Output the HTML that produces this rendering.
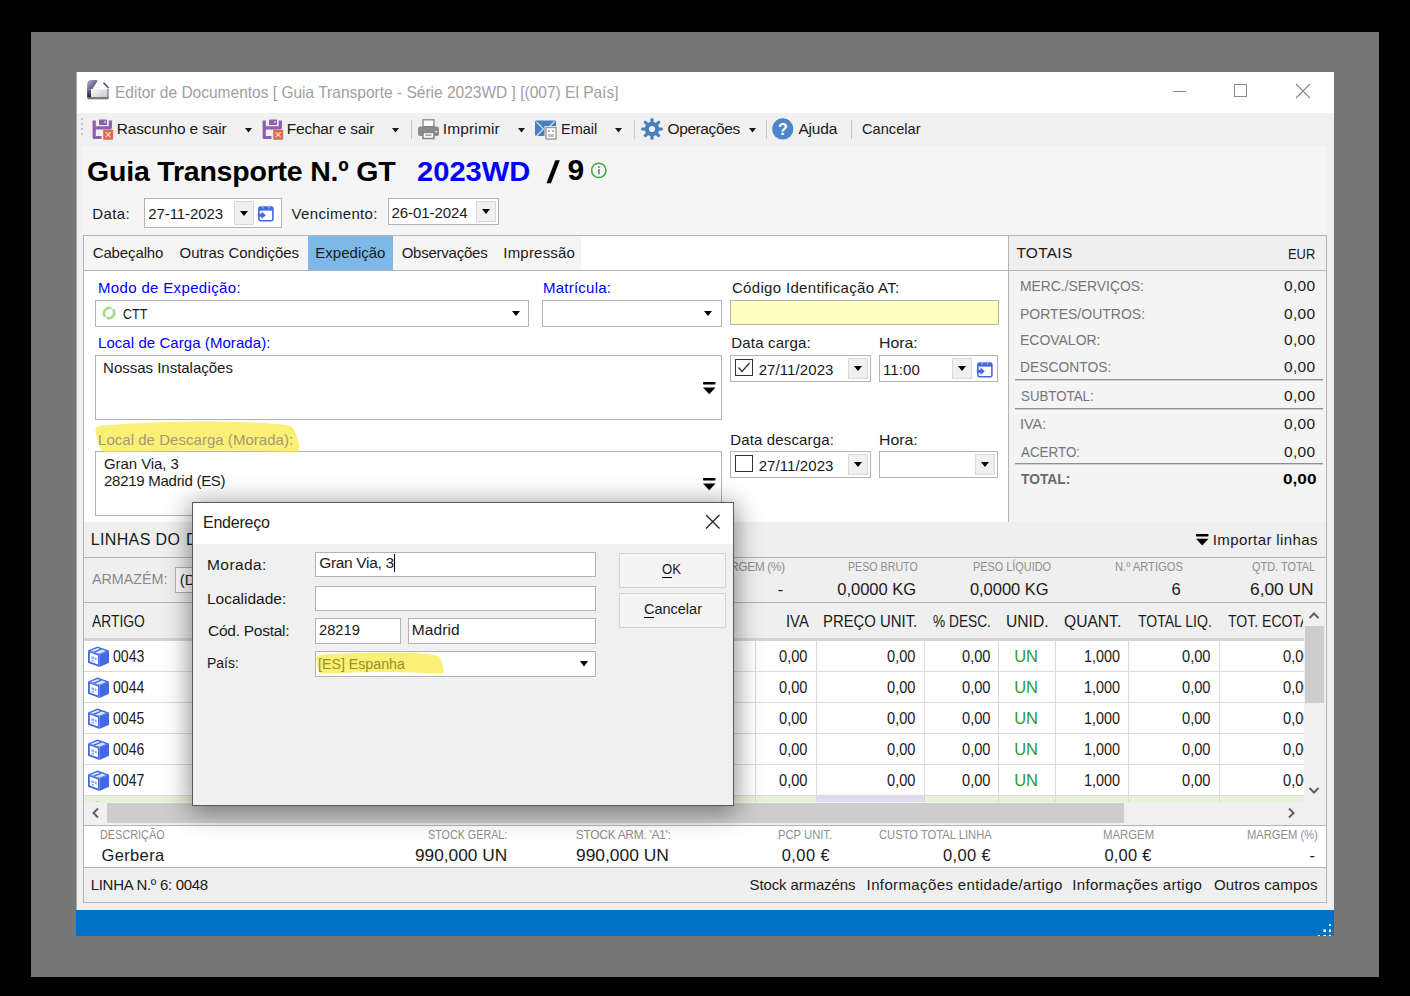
<!DOCTYPE html>
<html><head><meta charset="utf-8"><title>Editor de Documentos</title>
<style>
html,body{margin:0;padding:0;}
body{width:1410px;height:996px;position:relative;overflow:hidden;background:#000;font-family:"Liberation Sans",sans-serif;}
.a{position:absolute;}
.t{white-space:nowrap;transform-origin:0 0;}
svg.a{overflow:visible;}
</style></head><body>
<div class="a" style="left:31px;top:32px;width:1348px;height:945px;background:#767676;"></div>
<div class="a" style="left:76px;top:72px;width:1258px;height:864px;background:#f0f0f0;"></div>
<div class="a" style="left:76px;top:72px;width:1258px;height:41px;background:#ffffff;"></div>
<div class="a" style="left:76px;top:72px;width:1px;height:864px;background:#a9a9a9;"></div>
<div class="a" style="left:1173px;top:91px;width:13px;height:1px;background:#8a8a8a;"></div>
<div class="a" style="left:1234px;top:84px;width:13px;height:13px;box-sizing:border-box;border:1px solid #8a8a8a;"></div>
<svg class="a" style="left:1295px;top:83px;" width="16" height="16" viewBox="0 0 16 16"><path d="M1 1L15 15M15 1L1 15" stroke="#8a8a8a" stroke-width="1.1"/></svg>
<div class="a" style="left:82px;top:146px;width:1245px;height:89px;background:#f5f5f5;"></div>
<div class="a" style="left:83px;top:235px;width:926px;height:288px;background:#ffffff;box-sizing:border-box;border:1px solid #b4b4b4;"></div>
<div class="a" style="left:84px;top:236px;width:497px;height:34px;background:#f5f5f5;"></div>
<div class="a" style="left:308px;top:236px;width:85px;height:34px;background:#7eb8e8;"></div>
<div class="a" style="left:84px;top:270px;width:924px;height:1px;background:#b4b4b4;"></div>
<div class="a" style="left:1008px;top:235px;width:319px;height:288px;background:#f4f4f4;box-sizing:border-box;border:1px solid #b4b4b4;"></div>
<div class="a" style="left:1009px;top:236px;width:317px;height:34px;background:#efefef;"></div>
<div class="a" style="left:1009px;top:270px;width:317px;height:1px;background:#b4b4b4;"></div>
<div class="a" style="left:1015px;top:379px;width:308px;height:1px;background:#8f8f8f;"></div>
<div class="a" style="left:1015px;top:380px;width:308px;height:1px;background:#cfcfcf;"></div>
<div class="a" style="left:1015px;top:408px;width:308px;height:1px;background:#8f8f8f;"></div>
<div class="a" style="left:1015px;top:409px;width:308px;height:1px;background:#cfcfcf;"></div>
<div class="a" style="left:1015px;top:463px;width:308px;height:1px;background:#8f8f8f;"></div>
<div class="a" style="left:1015px;top:464px;width:308px;height:1px;background:#cfcfcf;"></div>
<div class="a" style="left:83px;top:522px;width:1244px;height:381px;background:#efefef;"></div>
<div class="a" style="left:83px;top:522px;width:1px;height:381px;background:#b4b4b4;"></div>
<div class="a" style="left:1326px;top:522px;width:1px;height:381px;background:#b4b4b4;"></div>
<div class="a" style="left:83px;top:557px;width:1244px;height:1px;background:#b4b4b4;"></div>
<div class="a" style="left:83px;top:602px;width:1244px;height:1px;background:#b4b4b4;"></div>
<div class="a" style="left:84px;top:638px;width:1220px;height:3px;background:#d4d4d4;"></div>
<div class="a" style="left:84px;top:641px;width:1220px;height:161px;background:#ffffff;"></div>
<div class="a" style="left:84px;top:671px;width:1220px;height:1px;background:#dadada;"></div>
<div class="a" style="left:84px;top:702px;width:1220px;height:1px;background:#dadada;"></div>
<div class="a" style="left:84px;top:733px;width:1220px;height:1px;background:#dadada;"></div>
<div class="a" style="left:84px;top:764px;width:1220px;height:1px;background:#dadada;"></div>
<div class="a" style="left:84px;top:795px;width:1220px;height:1px;background:#dadada;"></div>
<div class="a" style="left:84px;top:796px;width:1220px;height:6px;background:#e7f2dc;"></div>
<div class="a" style="left:816px;top:796px;width:108px;height:6px;background:#e1d9ee;"></div>
<div class="a" style="left:755px;top:641px;width:1px;height:161px;background:#dadada;"></div>
<div class="a" style="left:816px;top:641px;width:1px;height:161px;background:#dadada;"></div>
<div class="a" style="left:924px;top:641px;width:1px;height:161px;background:#dadada;"></div>
<div class="a" style="left:998px;top:641px;width:1px;height:161px;background:#dadada;"></div>
<div class="a" style="left:1055px;top:641px;width:1px;height:161px;background:#dadada;"></div>
<div class="a" style="left:1128px;top:641px;width:1px;height:161px;background:#dadada;"></div>
<div class="a" style="left:1219px;top:641px;width:1px;height:161px;background:#dadada;"></div>
<div class="a" style="left:1304px;top:603px;width:22px;height:199px;background:#f0f0f0;"></div>
<div class="a" style="left:1305px;top:626px;width:19px;height:77px;background:#cdcdcd;"></div>
<svg class="a" style="left:1308px;top:610px;" width="12" height="10" viewBox="0 0 12 10"><path d="M1.5 8L6 3.5L10.5 8" stroke="#606060" stroke-width="2" fill="none"/></svg>
<svg class="a" style="left:1308px;top:786px;" width="12" height="10" viewBox="0 0 12 10"><path d="M1.5 2L6 6.5L10.5 2" stroke="#606060" stroke-width="2" fill="none"/></svg>
<div class="a" style="left:84px;top:802px;width:1242px;height:24px;background:#f0f0f0;"></div>
<div class="a" style="left:107px;top:803px;width:1017px;height:20px;background:#cdcdcd;"></div>
<svg class="a" style="left:90px;top:807px;" width="10" height="12" viewBox="0 0 10 12"><path d="M8 1.5L3.5 6L8 10.5" stroke="#606060" stroke-width="2" fill="none"/></svg>
<svg class="a" style="left:1287px;top:807px;" width="10" height="12" viewBox="0 0 10 12"><path d="M2 1.5L6.5 6L2 10.5" stroke="#606060" stroke-width="2" fill="none"/></svg>
<div class="a" style="left:83px;top:825px;width:1244px;height:1px;background:#b4b4b4;"></div>
<div class="a" style="left:84px;top:826px;width:1242px;height:41px;background:#ffffff;"></div>
<div class="a" style="left:84px;top:867px;width:1242px;height:1px;background:#b4b4b4;"></div>
<div class="a" style="left:83px;top:902px;width:1244px;height:1px;background:#b4b4b4;"></div>
<div class="a" style="left:76px;top:910px;width:1258px;height:26px;background:#0072c6;"></div>
<div class="a" style="left:144px;top:198px;width:138px;height:30px;background:#ffffff;box-sizing:border-box;border:1px solid #b3b3b3;"></div>
<div class="a" style="left:234px;top:201px;width:20px;height:24px;background:#f0f0f0;box-sizing:border-box;border:1px solid #d9d9d9;"></div>
<svg class="a" style="left:240.0px;top:210.5px;" width="8" height="5" viewBox="0 0 8 5"><path d="M0 0H8L4.0 5Z" fill="#000"/></svg>
<div class="a" style="left:388px;top:198px;width:111px;height:27px;background:#ffffff;box-sizing:border-box;border:1px solid #b3b3b3;"></div>
<div class="a" style="left:476px;top:201px;width:20px;height:21px;background:#f0f0f0;box-sizing:border-box;border:1px solid #d9d9d9;"></div>
<svg class="a" style="left:482.0px;top:209.0px;" width="8" height="5" viewBox="0 0 8 5"><path d="M0 0H8L4.0 5Z" fill="#000"/></svg>
<div class="a" style="left:95px;top:300px;width:434px;height:27px;background:#ffffff;box-sizing:border-box;border:1px solid #b3b3b3;"></div>
<svg class="a" style="left:511.5px;top:310.5px;" width="8" height="5" viewBox="0 0 8 5"><path d="M0 0H8L4.0 5Z" fill="#000"/></svg>
<div class="a" style="left:542px;top:300px;width:180px;height:27px;background:#ffffff;box-sizing:border-box;border:1px solid #b3b3b3;"></div>
<svg class="a" style="left:703.7px;top:310.5px;" width="8" height="5" viewBox="0 0 8 5"><path d="M0 0H8L4.0 5Z" fill="#000"/></svg>
<div class="a" style="left:730px;top:300px;width:269px;height:25px;background:#ffffc0;box-sizing:border-box;border:1px solid #b3b3b3;"></div>
<div class="a" style="left:95px;top:355px;width:627px;height:65px;background:#ffffff;box-sizing:border-box;border:1px solid #b3b3b3;"></div>
<svg class="a" style="left:703px;top:382px;" width="13" height="13" viewBox="0 0 13 13"><rect x="0" y="0" width="12.5" height="2.6" rx="0.8" fill="#000"/><path d="M0 5.4H12.5L6.25 12.2Z" fill="#000"/></svg>
<div class="a" style="left:95px;top:451px;width:627px;height:65px;background:#ffffff;box-sizing:border-box;border:1px solid #b3b3b3;"></div>
<svg class="a" style="left:703px;top:478px;" width="13" height="13" viewBox="0 0 13 13"><rect x="0" y="0" width="12.5" height="2.6" rx="0.8" fill="#000"/><path d="M0 5.4H12.5L6.25 12.2Z" fill="#000"/></svg>
<div class="a" style="left:730px;top:355px;width:141px;height:27px;background:#ffffff;box-sizing:border-box;border:1px solid #b3b3b3;"></div>
<div class="a" style="left:735px;top:359px;width:18px;height:17px;box-sizing:border-box;border:1.3px solid #333333;"></div>
<svg class="a" style="left:735px;top:359px;" width="18" height="17" viewBox="0 0 18 17"><path d="M3.5 8.5L7 12.5L14.5 4" stroke="#333" stroke-width="1.3" fill="none"/></svg>
<div class="a" style="left:848px;top:358px;width:20px;height:21px;background:#f0f0f0;box-sizing:border-box;border:1px solid #d9d9d9;"></div>
<svg class="a" style="left:854.0px;top:366.0px;" width="8" height="5" viewBox="0 0 8 5"><path d="M0 0H8L4.0 5Z" fill="#000"/></svg>
<div class="a" style="left:879px;top:355px;width:119px;height:27px;background:#ffffff;box-sizing:border-box;border:1px solid #b3b3b3;"></div>
<div class="a" style="left:730px;top:451px;width:141px;height:27px;background:#ffffff;box-sizing:border-box;border:1px solid #b3b3b3;"></div>
<div class="a" style="left:735px;top:455px;width:18px;height:17px;box-sizing:border-box;border:1.3px solid #333333;"></div>
<div class="a" style="left:848px;top:454px;width:20px;height:21px;background:#f0f0f0;box-sizing:border-box;border:1px solid #d9d9d9;"></div>
<svg class="a" style="left:854.0px;top:462.0px;" width="8" height="5" viewBox="0 0 8 5"><path d="M0 0H8L4.0 5Z" fill="#000"/></svg>
<div class="a" style="left:879px;top:451px;width:119px;height:27px;background:#ffffff;box-sizing:border-box;border:1px solid #b3b3b3;"></div>
<div class="a" style="left:952px;top:358px;width:20px;height:21px;background:#f0f0f0;box-sizing:border-box;border:1px solid #d9d9d9;"></div>
<svg class="a" style="left:958.0px;top:366.0px;" width="8" height="5" viewBox="0 0 8 5"><path d="M0 0H8L4.0 5Z" fill="#000"/></svg>
<div class="a" style="left:975px;top:454px;width:20px;height:21px;background:#f0f0f0;box-sizing:border-box;border:1px solid #d9d9d9;"></div>
<svg class="a" style="left:981.0px;top:462.0px;" width="8" height="5" viewBox="0 0 8 5"><path d="M0 0H8L4.0 5Z" fill="#000"/></svg>
<div class="a" style="left:175px;top:567px;width:85px;height:26px;background:#ffffff;box-sizing:border-box;border:1px solid #b3b3b3;"></div>
<svg class="a" style="left:94px;top:420px;" width="208" height="35" viewBox="0 0 208 35"><path d="M1.5 8.5Q2 6 8 5.5Q60 1.2 120 1.5Q190 2.5 197 6.5Q201 9 204 20Q206 31 203 32.5Q150 30 100 30.5Q40 31.5 12 32Q7 32 5.5 27Q1 14 1.5 8.5Z" fill="rgba(246,234,64,0.72)"/></svg>
<div class="a t" style="left:115.36px;top:83.93px;font-size:16.5px;line-height:16.5px;color:#a0a0a0;transform:scaleX(0.9401);">Editor de Documentos [ Guia Transporte - Série 2023WD ] [(007) El País]</div>
<div class="a t" style="left:116.70px;top:121.28px;font-size:15.5px;line-height:15.5px;color:#1a1a1a;letter-spacing:-0.139px;">Rascunho e sair</div>
<div class="a t" style="left:286.80px;top:121.28px;font-size:15.5px;line-height:15.5px;color:#1a1a1a;letter-spacing:-0.232px;">Fechar e sair</div>
<div class="a t" style="left:442.70px;top:121.28px;font-size:15.5px;line-height:15.5px;color:#1a1a1a;letter-spacing:0.157px;">Imprimir</div>
<div class="a t" style="left:560.76px;top:121.28px;font-size:15.5px;line-height:15.5px;color:#1a1a1a;transform:scaleX(0.9353);">Email</div>
<div class="a t" style="left:667.50px;top:121.28px;font-size:15.5px;line-height:15.5px;color:#1a1a1a;letter-spacing:-0.396px;">Operações</div>
<div class="a t" style="left:798.40px;top:121.28px;font-size:15.5px;line-height:15.5px;color:#1a1a1a;letter-spacing:-0.181px;">Ajuda</div>
<div class="a t" style="left:862.10px;top:121.28px;font-size:15.5px;line-height:15.5px;color:#1a1a1a;transform:scaleX(0.9439);">Cancelar</div>
<div class="a t" style="left:87.00px;top:157.37px;font-size:28.5px;line-height:28.5px;color:#000;font-weight:bold;letter-spacing:-0.203px;">Guia Transporte N.º GT</div>
<div class="a t" style="left:417.10px;top:157.37px;font-size:28.5px;line-height:28.5px;color:#0000ff;font-weight:bold;transform:scaleX(1.0217);">2023WD</div>
<svg class="a" style="left:544px;top:158px;" width="18" height="28" viewBox="0 0 18 28"><path d="M2.5 25.2H7L15.8 2.2H11.3Z" fill="#000"/></svg>
<div class="a t" style="left:567.50px;top:155.20px;font-size:30px;line-height:30px;color:#000;font-weight:bold;">9</div>
<div class="a t" style="left:92.30px;top:205.50px;font-size:15px;line-height:15px;color:#1a1a1a;letter-spacing:0.354px;">Data:</div>
<div class="a t" style="left:148.30px;top:205.70px;font-size:15px;line-height:15px;color:#1a1a1a;letter-spacing:-0.086px;">27-11-2023</div>
<div class="a t" style="left:291.60px;top:205.50px;font-size:15px;line-height:15px;color:#1a1a1a;letter-spacing:0.322px;">Vencimento:</div>
<div class="a t" style="left:391.50px;top:205.30px;font-size:15px;line-height:15px;color:#1a1a1a;letter-spacing:-0.076px;">26-01-2024</div>
<div class="a t" style="left:92.70px;top:245.10px;font-size:15px;line-height:15px;color:#1a1a1a;letter-spacing:-0.122px;">Cabeçalho</div>
<div class="a t" style="left:179.50px;top:245.10px;font-size:15px;line-height:15px;color:#1a1a1a;letter-spacing:-0.031px;">Outras Condições</div>
<div class="a t" style="left:315.30px;top:245.10px;font-size:15px;line-height:15px;color:#1a1a1a;letter-spacing:0.012px;">Expedição</div>
<div class="a t" style="left:401.70px;top:245.10px;font-size:15px;line-height:15px;color:#1a1a1a;letter-spacing:-0.237px;">Observações</div>
<div class="a t" style="left:503.30px;top:245.10px;font-size:15px;line-height:15px;color:#1a1a1a;letter-spacing:0.202px;">Impressão</div>
<div class="a t" style="left:98.00px;top:280.00px;font-size:15px;line-height:15px;color:#0000ff;letter-spacing:0.342px;">Modo de Expedição:</div>
<div class="a t" style="left:543.00px;top:280.00px;font-size:15px;line-height:15px;color:#0000ff;letter-spacing:0.235px;">Matrícula:</div>
<div class="a t" style="left:731.90px;top:279.70px;font-size:15px;line-height:15px;color:#1a1a1a;letter-spacing:0.327px;">Código Identificação AT:</div>
<div class="a t" style="left:122.80px;top:306.00px;font-size:15px;line-height:15px;color:#1a1a1a;transform:scaleX(0.8346);">CTT</div>
<div class="a t" style="left:98.00px;top:335.40px;font-size:15px;line-height:15px;color:#0000ff;letter-spacing:0.063px;">Local de Carga (Morada):</div>
<div class="a t" style="left:731.30px;top:335.40px;font-size:15px;line-height:15px;color:#1a1a1a;letter-spacing:0.183px;">Data carga:</div>
<div class="a t" style="left:878.95px;top:335.40px;font-size:15px;line-height:15px;color:#1a1a1a;transform:scaleX(1.0547);">Hora:</div>
<div class="a t" style="left:103.10px;top:359.50px;font-size:15px;line-height:15px;color:#1a1a1a;letter-spacing:-0.015px;">Nossas Instalações</div>
<div class="a t" style="left:758.70px;top:362.10px;font-size:15px;line-height:15px;color:#1a1a1a;letter-spacing:0.087px;">27/11/2023</div>
<div class="a t" style="left:882.90px;top:362.10px;font-size:15px;line-height:15px;color:#1a1a1a;letter-spacing:0.130px;">11:00</div>
<div class="a t" style="left:98.00px;top:431.70px;font-size:15px;line-height:15px;color:#a39a78;letter-spacing:0.035px;">Local de Descarga (Morada):</div>
<div class="a t" style="left:730.30px;top:431.60px;font-size:15px;line-height:15px;color:#1a1a1a;letter-spacing:0.142px;">Data descarga:</div>
<div class="a t" style="left:878.95px;top:431.60px;font-size:15px;line-height:15px;color:#1a1a1a;transform:scaleX(1.0547);">Hora:</div>
<div class="a t" style="left:104.00px;top:456.00px;font-size:15px;line-height:15px;color:#1a1a1a;letter-spacing:-0.076px;">Gran Via, 3</div>
<div class="a t" style="left:104.00px;top:473.40px;font-size:15px;line-height:15px;color:#1a1a1a;letter-spacing:-0.269px;">28219 Madrid (ES)</div>
<div class="a t" style="left:758.70px;top:458.30px;font-size:15px;line-height:15px;color:#1a1a1a;letter-spacing:0.087px;">27/11/2023</div>
<div class="a t" style="left:1016.40px;top:245.38px;font-size:15.5px;line-height:15.5px;color:#1a1a1a;letter-spacing:0.259px;">TOTAIS</div>
<div class="a t" style="left:1288.04px;top:245.80px;font-size:15px;line-height:15px;color:#1a1a1a;transform:scaleX(0.8593);">EUR</div>
<div class="a t" style="left:1019.60px;top:278.38px;font-size:15.5px;line-height:15.5px;color:#767676;transform:scaleX(0.8951);">MERC./SERVIÇOS:</div>
<div class="a t" style="left:1284.00px;top:278.38px;font-size:15.5px;line-height:15.5px;color:#1a1a1a;letter-spacing:0.284px;">0,00</div>
<div class="a t" style="left:1019.60px;top:305.58px;font-size:15.5px;line-height:15.5px;color:#767676;transform:scaleX(0.9040);">PORTES/OUTROS:</div>
<div class="a t" style="left:1284.00px;top:305.58px;font-size:15.5px;line-height:15.5px;color:#1a1a1a;letter-spacing:0.284px;">0,00</div>
<div class="a t" style="left:1019.60px;top:332.18px;font-size:15.5px;line-height:15.5px;color:#767676;transform:scaleX(0.9013);">ECOVALOR:</div>
<div class="a t" style="left:1284.00px;top:332.18px;font-size:15.5px;line-height:15.5px;color:#1a1a1a;letter-spacing:0.284px;">0,00</div>
<div class="a t" style="left:1019.61px;top:359.48px;font-size:15.5px;line-height:15.5px;color:#767676;transform:scaleX(0.8929);">DESCONTOS:</div>
<div class="a t" style="left:1284.00px;top:359.48px;font-size:15.5px;line-height:15.5px;color:#1a1a1a;letter-spacing:0.284px;">0,00</div>
<div class="a t" style="left:1020.50px;top:388.38px;font-size:15.5px;line-height:15.5px;color:#767676;transform:scaleX(0.8586);">SUBTOTAL:</div>
<div class="a t" style="left:1284.00px;top:388.38px;font-size:15.5px;line-height:15.5px;color:#1a1a1a;letter-spacing:0.284px;">0,00</div>
<div class="a t" style="left:1019.57px;top:415.98px;font-size:15.5px;line-height:15.5px;color:#767676;transform:scaleX(0.9329);">IVA:</div>
<div class="a t" style="left:1284.00px;top:415.98px;font-size:15.5px;line-height:15.5px;color:#1a1a1a;letter-spacing:0.284px;">0,00</div>
<div class="a t" style="left:1020.50px;top:443.68px;font-size:15.5px;line-height:15.5px;color:#767676;transform:scaleX(0.8638);">ACERTO:</div>
<div class="a t" style="left:1284.00px;top:443.68px;font-size:15.5px;line-height:15.5px;color:#1a1a1a;letter-spacing:0.284px;">0,00</div>
<div class="a t" style="left:1020.50px;top:471.48px;font-size:15.5px;line-height:15.5px;color:#6a6a6a;font-weight:bold;transform:scaleX(0.8889);">TOTAL:</div>
<div class="a t" style="left:1282.60px;top:471.48px;font-size:15.5px;line-height:15.5px;color:#000;font-weight:bold;transform:scaleX(1.1101);">0,00</div>
<div class="a t" style="left:90.70px;top:532.16px;font-size:16px;line-height:16px;color:#1a1a1a;letter-spacing:0.363px;">LINHAS DO</div>
<div class="a t" style="left:186.00px;top:532.16px;font-size:16px;line-height:16px;color:#1a1a1a;">DOCUMENTO</div>
<div class="a t" style="left:1212.70px;top:531.80px;font-size:15px;line-height:15px;color:#1a1a1a;letter-spacing:0.407px;">Importar linhas</div>
<div class="a t" style="left:91.70px;top:571.48px;font-size:15.5px;line-height:15.5px;color:#8a8a8a;transform:scaleX(0.9230);">ARMAZÉM:</div>
<div class="a t" style="left:730.00px;top:561.44px;font-size:12px;line-height:12px;color:#8e8e8e;letter-spacing:-0.429px;">RGEM (%)</div>
<div class="a t" style="left:848.20px;top:561.44px;font-size:12px;line-height:12px;color:#8e8e8e;transform:scaleX(0.8883);">PESO BRUTO</div>
<div class="a t" style="left:973.00px;top:561.44px;font-size:12px;line-height:12px;color:#8e8e8e;transform:scaleX(0.9068);">PESO LÍQUIDO</div>
<div class="a t" style="left:1114.90px;top:561.44px;font-size:12px;line-height:12px;color:#8e8e8e;transform:scaleX(0.9319);">N.º ARTIGOS</div>
<div class="a t" style="left:1251.70px;top:561.44px;font-size:12px;line-height:12px;color:#8e8e8e;transform:scaleX(0.9100);">QTD. TOTAL</div>
<div class="a t" style="left:777.70px;top:580.53px;font-size:16.5px;line-height:16.5px;color:#1a1a1a;">-</div>
<div class="a t" style="left:837.30px;top:580.53px;font-size:16.5px;line-height:16.5px;color:#1a1a1a;letter-spacing:-0.020px;">0,0000 KG</div>
<div class="a t" style="left:969.90px;top:580.53px;font-size:16.5px;line-height:16.5px;color:#1a1a1a;letter-spacing:-0.020px;">0,0000 KG</div>
<div class="a t" style="left:1171.60px;top:580.53px;font-size:16.5px;line-height:16.5px;color:#1a1a1a;">6</div>
<div class="a t" style="left:1250.30px;top:580.53px;font-size:16.5px;line-height:16.5px;color:#1a1a1a;transform:scaleX(1.0501);">6,00 UN</div>
<div class="a t" style="left:91.70px;top:613.03px;font-size:16.5px;line-height:16.5px;color:#1a1a1a;transform:scaleX(0.8381);">ARTIGO</div>
<div class="a t" style="left:785.50px;top:613.03px;font-size:16.5px;line-height:16.5px;color:#1a1a1a;transform:scaleX(0.8988);">IVA</div>
<div class="a t" style="left:823.10px;top:613.03px;font-size:16.5px;line-height:16.5px;color:#1a1a1a;transform:scaleX(0.9016);">PREÇO UNIT.</div>
<div class="a t" style="left:933.20px;top:613.03px;font-size:16.5px;line-height:16.5px;color:#1a1a1a;transform:scaleX(0.8307);">% DESC.</div>
<div class="a t" style="left:1005.95px;top:613.03px;font-size:16.5px;line-height:16.5px;color:#1a1a1a;transform:scaleX(0.9462);">UNID.</div>
<div class="a t" style="left:1063.50px;top:613.03px;font-size:16.5px;line-height:16.5px;color:#1a1a1a;transform:scaleX(0.9462);">QUANT.</div>
<div class="a t" style="left:1137.60px;top:613.03px;font-size:16.5px;line-height:16.5px;color:#1a1a1a;transform:scaleX(0.8499);">TOTAL LIQ.</div>
<div class="a t" style="left:1227.50px;top:613.03px;font-size:16.5px;line-height:16.5px;color:#1a1a1a;transform:scaleX(0.8500);">TOT. ECOTAXA</div>
<div class="a t" style="left:113.20px;top:648.33px;font-size:16.5px;line-height:16.5px;color:#1a1a1a;transform:scaleX(0.8514);">0043</div>
<div class="a t" style="left:779.40px;top:648.33px;font-size:16.5px;line-height:16.5px;color:#1a1a1a;transform:scaleX(0.8861);">0,00</div>
<div class="a t" style="left:886.80px;top:648.33px;font-size:16.5px;line-height:16.5px;color:#1a1a1a;transform:scaleX(0.8861);">0,00</div>
<div class="a t" style="left:961.70px;top:648.33px;font-size:16.5px;line-height:16.5px;color:#1a1a1a;transform:scaleX(0.8861);">0,00</div>
<div class="a t" style="left:1014.30px;top:648.33px;font-size:16.5px;line-height:16.5px;color:#2f9a2f;letter-spacing:-0.216px;">UN</div>
<div class="a t" style="left:1083.83px;top:648.33px;font-size:16.5px;line-height:16.5px;color:#1a1a1a;transform:scaleX(0.8725);">1,000</div>
<div class="a t" style="left:1182.30px;top:648.33px;font-size:16.5px;line-height:16.5px;color:#1a1a1a;transform:scaleX(0.8861);">0,00</div>
<div class="a t" style="left:1282.50px;top:648.33px;font-size:16.5px;line-height:16.5px;color:#1a1a1a;transform:scaleX(0.8861);">0,00</div>
<div class="a t" style="left:113.20px;top:679.33px;font-size:16.5px;line-height:16.5px;color:#1a1a1a;transform:scaleX(0.8514);">0044</div>
<div class="a t" style="left:779.40px;top:679.33px;font-size:16.5px;line-height:16.5px;color:#1a1a1a;transform:scaleX(0.8861);">0,00</div>
<div class="a t" style="left:886.80px;top:679.33px;font-size:16.5px;line-height:16.5px;color:#1a1a1a;transform:scaleX(0.8861);">0,00</div>
<div class="a t" style="left:961.70px;top:679.33px;font-size:16.5px;line-height:16.5px;color:#1a1a1a;transform:scaleX(0.8861);">0,00</div>
<div class="a t" style="left:1014.30px;top:679.33px;font-size:16.5px;line-height:16.5px;color:#2f9a2f;letter-spacing:-0.216px;">UN</div>
<div class="a t" style="left:1083.83px;top:679.33px;font-size:16.5px;line-height:16.5px;color:#1a1a1a;transform:scaleX(0.8725);">1,000</div>
<div class="a t" style="left:1182.30px;top:679.33px;font-size:16.5px;line-height:16.5px;color:#1a1a1a;transform:scaleX(0.8861);">0,00</div>
<div class="a t" style="left:1282.50px;top:679.33px;font-size:16.5px;line-height:16.5px;color:#1a1a1a;transform:scaleX(0.8861);">0,00</div>
<div class="a t" style="left:113.20px;top:710.33px;font-size:16.5px;line-height:16.5px;color:#1a1a1a;transform:scaleX(0.8514);">0045</div>
<div class="a t" style="left:779.40px;top:710.33px;font-size:16.5px;line-height:16.5px;color:#1a1a1a;transform:scaleX(0.8861);">0,00</div>
<div class="a t" style="left:886.80px;top:710.33px;font-size:16.5px;line-height:16.5px;color:#1a1a1a;transform:scaleX(0.8861);">0,00</div>
<div class="a t" style="left:961.70px;top:710.33px;font-size:16.5px;line-height:16.5px;color:#1a1a1a;transform:scaleX(0.8861);">0,00</div>
<div class="a t" style="left:1014.30px;top:710.33px;font-size:16.5px;line-height:16.5px;color:#2f9a2f;letter-spacing:-0.216px;">UN</div>
<div class="a t" style="left:1083.83px;top:710.33px;font-size:16.5px;line-height:16.5px;color:#1a1a1a;transform:scaleX(0.8725);">1,000</div>
<div class="a t" style="left:1182.30px;top:710.33px;font-size:16.5px;line-height:16.5px;color:#1a1a1a;transform:scaleX(0.8861);">0,00</div>
<div class="a t" style="left:1282.50px;top:710.33px;font-size:16.5px;line-height:16.5px;color:#1a1a1a;transform:scaleX(0.8861);">0,00</div>
<div class="a t" style="left:113.20px;top:741.33px;font-size:16.5px;line-height:16.5px;color:#1a1a1a;transform:scaleX(0.8514);">0046</div>
<div class="a t" style="left:779.40px;top:741.33px;font-size:16.5px;line-height:16.5px;color:#1a1a1a;transform:scaleX(0.8861);">0,00</div>
<div class="a t" style="left:886.80px;top:741.33px;font-size:16.5px;line-height:16.5px;color:#1a1a1a;transform:scaleX(0.8861);">0,00</div>
<div class="a t" style="left:961.70px;top:741.33px;font-size:16.5px;line-height:16.5px;color:#1a1a1a;transform:scaleX(0.8861);">0,00</div>
<div class="a t" style="left:1014.30px;top:741.33px;font-size:16.5px;line-height:16.5px;color:#2f9a2f;letter-spacing:-0.216px;">UN</div>
<div class="a t" style="left:1083.83px;top:741.33px;font-size:16.5px;line-height:16.5px;color:#1a1a1a;transform:scaleX(0.8725);">1,000</div>
<div class="a t" style="left:1182.30px;top:741.33px;font-size:16.5px;line-height:16.5px;color:#1a1a1a;transform:scaleX(0.8861);">0,00</div>
<div class="a t" style="left:1282.50px;top:741.33px;font-size:16.5px;line-height:16.5px;color:#1a1a1a;transform:scaleX(0.8861);">0,00</div>
<div class="a t" style="left:113.20px;top:772.33px;font-size:16.5px;line-height:16.5px;color:#1a1a1a;transform:scaleX(0.8514);">0047</div>
<div class="a t" style="left:779.40px;top:772.33px;font-size:16.5px;line-height:16.5px;color:#1a1a1a;transform:scaleX(0.8861);">0,00</div>
<div class="a t" style="left:886.80px;top:772.33px;font-size:16.5px;line-height:16.5px;color:#1a1a1a;transform:scaleX(0.8861);">0,00</div>
<div class="a t" style="left:961.70px;top:772.33px;font-size:16.5px;line-height:16.5px;color:#1a1a1a;transform:scaleX(0.8861);">0,00</div>
<div class="a t" style="left:1014.30px;top:772.33px;font-size:16.5px;line-height:16.5px;color:#2f9a2f;letter-spacing:-0.216px;">UN</div>
<div class="a t" style="left:1083.83px;top:772.33px;font-size:16.5px;line-height:16.5px;color:#1a1a1a;transform:scaleX(0.8725);">1,000</div>
<div class="a t" style="left:1182.30px;top:772.33px;font-size:16.5px;line-height:16.5px;color:#1a1a1a;transform:scaleX(0.8861);">0,00</div>
<div class="a t" style="left:1282.50px;top:772.33px;font-size:16.5px;line-height:16.5px;color:#1a1a1a;transform:scaleX(0.8861);">0,00</div>
<div class="a t" style="left:99.50px;top:829.44px;font-size:12px;line-height:12px;color:#8e8e8e;transform:scaleX(0.9069);">DESCRIÇÃO</div>
<div class="a t" style="left:428.20px;top:829.44px;font-size:12px;line-height:12px;color:#8e8e8e;transform:scaleX(0.8963);">STOCK GERAL:</div>
<div class="a t" style="left:575.80px;top:829.44px;font-size:12px;line-height:12px;color:#8e8e8e;letter-spacing:-0.317px;">STOCK ARM. &#x27;A1&#x27;:</div>
<div class="a t" style="left:777.70px;top:829.44px;font-size:12px;line-height:12px;color:#8e8e8e;transform:scaleX(0.9363);">PCP UNIT.</div>
<div class="a t" style="left:879.00px;top:829.44px;font-size:12px;line-height:12px;color:#8e8e8e;transform:scaleX(0.9344);">CUSTO TOTAL LINHA</div>
<div class="a t" style="left:1102.80px;top:829.44px;font-size:12px;line-height:12px;color:#8e8e8e;transform:scaleX(0.9462);">MARGEM</div>
<div class="a t" style="left:1246.50px;top:829.44px;font-size:12px;line-height:12px;color:#8e8e8e;transform:scaleX(0.9316);">MARGEM (%)</div>
<div class="a t" style="left:101.50px;top:847.13px;font-size:16.5px;line-height:16.5px;color:#1a1a1a;letter-spacing:0.358px;">Gerbera</div>
<div class="a t" style="left:415.30px;top:847.13px;font-size:16.5px;line-height:16.5px;color:#1a1a1a;transform:scaleX(1.0466);">990,000 UN</div>
<div class="a t" style="left:575.80px;top:847.13px;font-size:16.5px;line-height:16.5px;color:#1a1a1a;transform:scaleX(1.0546);">990,000 UN</div>
<div class="a t" style="left:781.80px;top:847.13px;font-size:16.5px;line-height:16.5px;color:#1a1a1a;letter-spacing:0.400px;">0,00 €</div>
<div class="a t" style="left:943.00px;top:847.13px;font-size:16.5px;line-height:16.5px;color:#1a1a1a;letter-spacing:0.380px;">0,00 €</div>
<div class="a t" style="left:1104.40px;top:847.13px;font-size:16.5px;line-height:16.5px;color:#1a1a1a;letter-spacing:0.220px;">0,00 €</div>
<div class="a t" style="left:1309.40px;top:847.13px;font-size:16.5px;line-height:16.5px;color:#1a1a1a;">-</div>
<div class="a t" style="left:90.70px;top:876.80px;font-size:15px;line-height:15px;color:#1a1a1a;letter-spacing:-0.294px;">LINHA N.º 6: 0048</div>
<div class="a t" style="left:749.60px;top:876.80px;font-size:15px;line-height:15px;color:#1a1a1a;letter-spacing:-0.134px;">Stock armazéns</div>
<div class="a t" style="left:866.60px;top:876.80px;font-size:15px;line-height:15px;color:#1a1a1a;letter-spacing:0.377px;">Informações entidade/artigo</div>
<div class="a t" style="left:1072.30px;top:876.80px;font-size:15px;line-height:15px;color:#1a1a1a;letter-spacing:0.319px;">Informações artigo</div>
<div class="a t" style="left:1214.00px;top:876.80px;font-size:15px;line-height:15px;color:#1a1a1a;letter-spacing:0.141px;">Outros campos</div>
<div class="a t" style="left:179.80px;top:572.30px;font-size:15px;line-height:15px;color:#1a1a1a;">(Default)</div>
<div class="a" style="left:1304px;top:603px;width:22px;height:199px;background:#f0f0f0;"></div>
<div class="a" style="left:1303px;top:603px;width:1px;height:35px;background:#f0f0f0;"></div>
<div class="a" style="left:1305px;top:626px;width:19px;height:77px;background:#cdcdcd;"></div>
<svg class="a" style="left:1308px;top:610px;" width="12" height="10" viewBox="0 0 12 10"><path d="M1.5 8L6 3.5L10.5 8" stroke="#606060" stroke-width="2" fill="none"/></svg>
<svg class="a" style="left:1308px;top:786px;" width="12" height="10" viewBox="0 0 12 10"><path d="M1.5 2L6 6.5L10.5 2" stroke="#606060" stroke-width="2" fill="none"/></svg>
<div class="a" style="left:1326px;top:603px;width:8px;height:199px;background:#f0f0f0;"></div>
<div class="a" style="left:1326px;top:603px;width:1px;height:199px;background:#b4b4b4;"></div>
<svg class="a" style="left:86px;top:79px;" width="24" height="22" viewBox="0 0 24 22">
<defs><linearGradient id="wg1" x1="0" y1="0" x2="1" y2="1"><stop offset="0" stop-color="#b7b0d2"/><stop offset="1" stop-color="#3e3958"/></linearGradient>
<linearGradient id="wg2" x1="0" y1="0" x2="1" y2="1"><stop offset="0" stop-color="#ffffff"/><stop offset="1" stop-color="#c4bfc8"/></linearGradient>
<linearGradient id="wg3" x1="0" y1="0" x2="0" y2="1"><stop offset="0" stop-color="#6a6488"/><stop offset="1" stop-color="#2a2640"/></linearGradient></defs>
<path d="M1.1 5.5Q1.1 0.9 5.5 0.9H10.5Q12.2 1.2 11.2 2.8L6 10.5H1.1Z" fill="url(#wg1)"/>
<rect x="1.1" y="10.5" width="4" height="8" fill="url(#wg3)"/>
<rect x="5" y="10" width="17.5" height="8.5" fill="url(#wg2)"/>
<path d="M6.5 10.2L15.5 1.5L22.6 9.2V10.2Z" fill="#ffffff"/>
<path d="M17.5 3.6L22.6 9" stroke="#5a5670" stroke-width="1.6" fill="none"/>
<rect x="21.2" y="10" width="1.6" height="9" fill="#9a98a0"/>
<path d="M1.5 19.2H22.5" stroke="#5e5e5e" stroke-width="2.2" opacity="0.85"/>
</svg>
<div class="a" style="left:81px;top:118px;width:2px;height:2px;background:#c4c4c4;"></div>
<div class="a" style="left:81px;top:123px;width:2px;height:2px;background:#c4c4c4;"></div>
<div class="a" style="left:81px;top:128px;width:2px;height:2px;background:#c4c4c4;"></div>
<div class="a" style="left:81px;top:133px;width:2px;height:2px;background:#c4c4c4;"></div>
<svg class="a" style="left:91.5px;top:119px;" width="22" height="22" viewBox="0 0 22 22">
<path d="M2.2 1.5V18.5H9.5M2.2 8.8H18.3V1.5" stroke="#8e5fb0" stroke-width="3.2" fill="none" stroke-linejoin="round"/>
<rect x="7" y="0.5" width="8" height="5.5" rx="0.8" fill="#8e5fb0"/>
<rect x="12" y="2" width="2" height="2" fill="#c9b0dc"/>
<rect x="11.2" y="10.7" width="10" height="10" rx="0.6" fill="#e06a4c"/>
<path d="M13.8 13.3L18.6 18.1M18.6 13.3L13.8 18.1" stroke="#f4d6cc" stroke-width="1.3"/>
</svg>
<svg class="a" style="left:262.3px;top:119px;" width="22" height="22" viewBox="0 0 22 22">
<path d="M2.2 1.5V18.5H9.5M2.2 8.8H18.3V1.5" stroke="#8e5fb0" stroke-width="3.2" fill="none" stroke-linejoin="round"/>
<rect x="7" y="0.5" width="8" height="5.5" rx="0.8" fill="#8e5fb0"/>
<rect x="12" y="2" width="2" height="2" fill="#c9b0dc"/>
<rect x="11.2" y="10.7" width="10" height="10" rx="0.6" fill="#e06a4c"/>
<path d="M13.8 13.3L18.6 18.1M18.6 13.3L13.8 18.1" stroke="#f4d6cc" stroke-width="1.3"/>
</svg>
<svg class="a" style="left:244.5px;top:127.5px;" width="7" height="4.5" viewBox="0 0 7 4.5"><path d="M0 0H7L3.5 4.5Z" fill="#1a1a1a"/></svg>
<svg class="a" style="left:392px;top:127.5px;" width="7" height="4.5" viewBox="0 0 7 4.5"><path d="M0 0H7L3.5 4.5Z" fill="#1a1a1a"/></svg>
<svg class="a" style="left:518px;top:127.5px;" width="7" height="4.5" viewBox="0 0 7 4.5"><path d="M0 0H7L3.5 4.5Z" fill="#1a1a1a"/></svg>
<svg class="a" style="left:615.3px;top:127.5px;" width="7" height="4.5" viewBox="0 0 7 4.5"><path d="M0 0H7L3.5 4.5Z" fill="#1a1a1a"/></svg>
<svg class="a" style="left:749.4px;top:127.5px;" width="7" height="4.5" viewBox="0 0 7 4.5"><path d="M0 0H7L3.5 4.5Z" fill="#1a1a1a"/></svg>
<div class="a" style="left:411px;top:120px;width:1px;height:19px;background:#c8c8c8;"></div>
<div class="a" style="left:634px;top:120px;width:1px;height:19px;background:#c8c8c8;"></div>
<div class="a" style="left:766px;top:120px;width:1px;height:19px;background:#c8c8c8;"></div>
<div class="a" style="left:851px;top:120px;width:1px;height:19px;background:#c8c8c8;"></div>
<svg class="a" style="left:417px;top:119px;" width="23" height="21" viewBox="0 0 23 21">
<rect x="6" y="0.8" width="11" height="9" fill="#ffffff" stroke="#999" stroke-width="1.6"/>
<rect x="6" y="7" width="11" height="3" fill="#4a7fbf"/>
<path d="M3 7.5H20Q22 7.5 22 9.5V15Q22 17 20 17H3Q1 17 1 15V9.5Q1 7.5 3 7.5Z" fill="#8a8a8a"/>
<rect x="6" y="13.5" width="11" height="6" fill="#ffffff" stroke="#888" stroke-width="1.6"/>
<rect x="8.5" y="15.5" width="6" height="1.6" fill="#7aa6d6"/>
<rect x="18" y="12" width="2.5" height="1.2" fill="#ddd"/>
</svg>
<svg class="a" style="left:534px;top:119px;" width="24" height="22" viewBox="0 0 24 22">
<rect x="1" y="1.5" width="21" height="15.5" rx="1.5" fill="#4a7fbf"/>
<path d="M2.5 3L9.5 10L2.5 17M20.5 2.5L15 8" stroke="#d6e3f2" stroke-width="1.1" fill="none"/>
<rect x="11" y="7.5" width="12" height="13.5" fill="#f4f4f4" stroke="#f0f0f0" stroke-width="1"/>
<rect x="12" y="8.5" width="10" height="11.5" fill="#ffffff" stroke="#9a9a9a" stroke-width="1.4"/>
<circle cx="15" cy="12" r="1.1" fill="#a0a0a0"/><circle cx="19" cy="12" r="1.1" fill="#a0a0a0"/>
<rect x="14" y="15" width="6" height="3.2" fill="#c2c2c2"/>
</svg>
<svg class="a" style="left:640.5px;top:118px;" width="22" height="22" viewBox="0 0 22 22"><rect x="9.4" y="0.1999999999999993" width="3.2" height="5" rx="1" fill="#4a7fbf" transform="rotate(0 11 11)"/><rect x="9.4" y="0.1999999999999993" width="3.2" height="5" rx="1" fill="#4a7fbf" transform="rotate(45 11 11)"/><rect x="9.4" y="0.1999999999999993" width="3.2" height="5" rx="1" fill="#4a7fbf" transform="rotate(90 11 11)"/><rect x="9.4" y="0.1999999999999993" width="3.2" height="5" rx="1" fill="#4a7fbf" transform="rotate(135 11 11)"/><rect x="9.4" y="0.1999999999999993" width="3.2" height="5" rx="1" fill="#4a7fbf" transform="rotate(180 11 11)"/><rect x="9.4" y="0.1999999999999993" width="3.2" height="5" rx="1" fill="#4a7fbf" transform="rotate(225 11 11)"/><rect x="9.4" y="0.1999999999999993" width="3.2" height="5" rx="1" fill="#4a7fbf" transform="rotate(270 11 11)"/><rect x="9.4" y="0.1999999999999993" width="3.2" height="5" rx="1" fill="#4a7fbf" transform="rotate(315 11 11)"/><circle cx="11" cy="11" r="5.2" fill="none" stroke="#4a7fbf" stroke-width="4.2"/></svg>
<svg class="a" style="left:772px;top:118px;" width="22" height="22" viewBox="0 0 22 22"><circle cx="10.8" cy="10.9" r="10.6" fill="#4a86c8"/><text x="10.8" y="16.6" text-anchor="middle" font-family="Liberation Sans" font-weight="bold" font-size="16" fill="#fff">?</text></svg>
<svg class="a" style="left:590px;top:162px;" width="18" height="17" viewBox="0 0 18 17"><circle cx="8.8" cy="8.4" r="7.2" fill="none" stroke="#43a047" stroke-width="1.5"/><rect x="8" y="7" width="1.7" height="5.3" fill="#43a047"/><rect x="8" y="4.2" width="1.7" height="1.7" fill="#43a047"/></svg>
<svg class="a" style="left:257px;top:205px;" width="18" height="17" viewBox="0 0 18 17">
<rect x="1.9" y="2" width="14" height="13.8" rx="1.6" fill="none" stroke="#4169e1" stroke-width="1.6"/>
<rect x="1.9" y="2" width="14" height="3.6" fill="#4169e1"/>
<rect x="5" y="0.6" width="1.4" height="3" fill="#9fb4f0"/><rect x="11" y="0.6" width="1.4" height="3" fill="#9fb4f0"/>
<path d="M0.8 8.8H4.5V6.5L8.8 10.3L4.5 14.1V11.8H0.8Z" fill="#4169e1"/>
</svg>
<svg class="a" style="left:975.5px;top:361px;" width="18" height="17" viewBox="0 0 18 17">
<rect x="1.9" y="2" width="14" height="13.8" rx="1.6" fill="none" stroke="#4169e1" stroke-width="1.6"/>
<rect x="1.9" y="2" width="14" height="3.6" fill="#4169e1"/>
<rect x="5" y="0.6" width="1.4" height="3" fill="#9fb4f0"/><rect x="11" y="0.6" width="1.4" height="3" fill="#9fb4f0"/>
<path d="M0.8 8.8H4.5V6.5L8.8 10.3L4.5 14.1V11.8H0.8Z" fill="#4169e1"/>
</svg>
<svg class="a" style="left:101px;top:305px;" width="16" height="16" viewBox="0 0 16 16"><path d="M9.5 3A5.4 5.4 0 0 0 3.6 10.8" stroke="#a4d88a" stroke-width="2.6" fill="none" stroke-linecap="round"/><path d="M6.5 13A5.4 5.4 0 0 0 12.6 5.2" stroke="#a4d88a" stroke-width="2.6" fill="none" stroke-linecap="round"/></svg>
<svg class="a" style="left:1195.5px;top:533.5px;" width="13" height="12" viewBox="0 0 13 12"><rect x="0" y="0" width="12.5" height="2.6" rx="0.8" fill="#000"/><path d="M0 4.8H12.5L6.25 11.6Z" fill="#000"/></svg>
<svg class="a" style="left:86.5px;top:644.5px;" width="23" height="23" viewBox="0 0 23 23">
<path d="M1 5.5L10.5 1.5L22 5.5L12.5 9.5Z" fill="#4169e1"/>
<path d="M3.5 5.8L10.6 2.9L13 3.9L6 6.8Z" fill="#dbe3fa"/><path d="M8 7.5L15 4.6L19 5.9L12.3 8.7Z" fill="#dbe3fa"/>
<path d="M1 5.5L12.5 9.5V22L1 17.8Z" fill="#4169e1"/>
<path d="M2.8 7.6L11 10.5V19.6L2.8 16.6Z" fill="#ffffff"/>
<path d="M4.5 11L7 12V14.4L4.5 13.4Z M7.8 12.3L9.6 13V15.4L7.8 14.7Z M4.5 14.6L7 15.5V17L4.5 16.1Z" fill="#8ea5ec"/>
<path d="M12.5 9.5L22 5.5V17.8L12.5 22Z" fill="#4169e1"/>
</svg>
<svg class="a" style="left:86.5px;top:675.5px;" width="23" height="23" viewBox="0 0 23 23">
<path d="M1 5.5L10.5 1.5L22 5.5L12.5 9.5Z" fill="#4169e1"/>
<path d="M3.5 5.8L10.6 2.9L13 3.9L6 6.8Z" fill="#dbe3fa"/><path d="M8 7.5L15 4.6L19 5.9L12.3 8.7Z" fill="#dbe3fa"/>
<path d="M1 5.5L12.5 9.5V22L1 17.8Z" fill="#4169e1"/>
<path d="M2.8 7.6L11 10.5V19.6L2.8 16.6Z" fill="#ffffff"/>
<path d="M4.5 11L7 12V14.4L4.5 13.4Z M7.8 12.3L9.6 13V15.4L7.8 14.7Z M4.5 14.6L7 15.5V17L4.5 16.1Z" fill="#8ea5ec"/>
<path d="M12.5 9.5L22 5.5V17.8L12.5 22Z" fill="#4169e1"/>
</svg>
<svg class="a" style="left:86.5px;top:706.5px;" width="23" height="23" viewBox="0 0 23 23">
<path d="M1 5.5L10.5 1.5L22 5.5L12.5 9.5Z" fill="#4169e1"/>
<path d="M3.5 5.8L10.6 2.9L13 3.9L6 6.8Z" fill="#dbe3fa"/><path d="M8 7.5L15 4.6L19 5.9L12.3 8.7Z" fill="#dbe3fa"/>
<path d="M1 5.5L12.5 9.5V22L1 17.8Z" fill="#4169e1"/>
<path d="M2.8 7.6L11 10.5V19.6L2.8 16.6Z" fill="#ffffff"/>
<path d="M4.5 11L7 12V14.4L4.5 13.4Z M7.8 12.3L9.6 13V15.4L7.8 14.7Z M4.5 14.6L7 15.5V17L4.5 16.1Z" fill="#8ea5ec"/>
<path d="M12.5 9.5L22 5.5V17.8L12.5 22Z" fill="#4169e1"/>
</svg>
<svg class="a" style="left:86.5px;top:737.5px;" width="23" height="23" viewBox="0 0 23 23">
<path d="M1 5.5L10.5 1.5L22 5.5L12.5 9.5Z" fill="#4169e1"/>
<path d="M3.5 5.8L10.6 2.9L13 3.9L6 6.8Z" fill="#dbe3fa"/><path d="M8 7.5L15 4.6L19 5.9L12.3 8.7Z" fill="#dbe3fa"/>
<path d="M1 5.5L12.5 9.5V22L1 17.8Z" fill="#4169e1"/>
<path d="M2.8 7.6L11 10.5V19.6L2.8 16.6Z" fill="#ffffff"/>
<path d="M4.5 11L7 12V14.4L4.5 13.4Z M7.8 12.3L9.6 13V15.4L7.8 14.7Z M4.5 14.6L7 15.5V17L4.5 16.1Z" fill="#8ea5ec"/>
<path d="M12.5 9.5L22 5.5V17.8L12.5 22Z" fill="#4169e1"/>
</svg>
<svg class="a" style="left:86.5px;top:768.5px;" width="23" height="23" viewBox="0 0 23 23">
<path d="M1 5.5L10.5 1.5L22 5.5L12.5 9.5Z" fill="#4169e1"/>
<path d="M3.5 5.8L10.6 2.9L13 3.9L6 6.8Z" fill="#dbe3fa"/><path d="M8 7.5L15 4.6L19 5.9L12.3 8.7Z" fill="#dbe3fa"/>
<path d="M1 5.5L12.5 9.5V22L1 17.8Z" fill="#4169e1"/>
<path d="M2.8 7.6L11 10.5V19.6L2.8 16.6Z" fill="#ffffff"/>
<path d="M4.5 11L7 12V14.4L4.5 13.4Z M7.8 12.3L9.6 13V15.4L7.8 14.7Z M4.5 14.6L7 15.5V17L4.5 16.1Z" fill="#8ea5ec"/>
<path d="M12.5 9.5L22 5.5V17.8L12.5 22Z" fill="#4169e1"/>
</svg>
<div class="a" style="left:84px;top:796px;width:30px;height:6px;overflow:hidden;"><svg style="position:absolute;left:2.5px;top:3.5px" width="23" height="23" viewBox="0 0 23 23"><path d="M1 5.5L10.5 1.5L22 5.5L12.5 9.5Z" fill="#4169e1"/><path d="M3.5 5.8L10.6 2.9L13 3.9L6 6.8Z" fill="#dbe3fa"/><path d="M1 5.5L12.5 9.5V22L1 17.8Z" fill="#4169e1"/><path d="M12.5 9.5L22 5.5V17.8L12.5 22Z" fill="#4169e1"/></svg></div>
<div class="a" style="left:1328.5px;top:923.5px;width:2.5px;height:2.5px;background:#a9b8c6;"></div>
<div class="a" style="left:1329.3px;top:924.3px;width:2.0px;height:2.0px;background:#ffffff;"></div>
<div class="a" style="left:1323px;top:929px;width:2.5px;height:2.5px;background:#a9b8c6;"></div>
<div class="a" style="left:1323.8px;top:929.8px;width:2.0px;height:2.0px;background:#ffffff;"></div>
<div class="a" style="left:1328.5px;top:929px;width:2.5px;height:2.5px;background:#a9b8c6;"></div>
<div class="a" style="left:1329.3px;top:929.8px;width:2.0px;height:2.0px;background:#ffffff;"></div>
<div class="a" style="left:1317.5px;top:934.5px;width:2.5px;height:2.5px;background:#a9b8c6;"></div>
<div class="a" style="left:1318.3px;top:935.3px;width:2.0px;height:2.0px;background:#ffffff;"></div>
<div class="a" style="left:1323px;top:934.5px;width:2.5px;height:2.5px;background:#a9b8c6;"></div>
<div class="a" style="left:1323.8px;top:935.3px;width:2.0px;height:2.0px;background:#ffffff;"></div>
<div class="a" style="left:1328.5px;top:934.5px;width:2.5px;height:2.5px;background:#a9b8c6;"></div>
<div class="a" style="left:1329.3px;top:935.3px;width:2.0px;height:2.0px;background:#ffffff;"></div>
<div class="a" style="left:1300px;top:936px;width:34px;height:4px;background:#767676;"></div>
<div class="a" style="left:192px;top:502px;width:542px;height:304px;background:#f0f0f0;box-shadow:0 4px 24px 2px rgba(0,0,0,0.45);"></div>
<div class="a" style="left:192px;top:502px;width:542px;height:304px;box-sizing:border-box;border:1px solid #595959;z-index:0;"></div>
<div class="a" style="left:193px;top:503px;width:540px;height:41px;background:#ffffff;"></div>
<svg class="a" style="left:705px;top:514px;" width="16" height="16" viewBox="0 0 16 16"><path d="M1 1L14.5 14.5M14.5 1L1 14.5" stroke="#222" stroke-width="1.3"/></svg>
<div class="a" style="left:315px;top:552px;width:281px;height:25px;background:#ffffff;box-sizing:border-box;border:1px solid #b3b3b3;"></div>
<div class="a" style="left:315px;top:586px;width:281px;height:25px;background:#ffffff;box-sizing:border-box;border:1px solid #b3b3b3;"></div>
<div class="a" style="left:315px;top:651px;width:281px;height:26px;background:#ffffff;box-sizing:border-box;border:1px solid #b3b3b3;"></div>
<div class="a" style="left:315px;top:618px;width:86px;height:26px;background:#ffffff;box-sizing:border-box;border:1px solid #b3b3b3;"></div>
<div class="a" style="left:408px;top:618px;width:188px;height:26px;background:#ffffff;box-sizing:border-box;border:1px solid #b3b3b3;"></div>
<svg class="a" style="left:579.5px;top:661px;" width="8" height="6" viewBox="0 0 8 6"><path d="M0 0H8L4 5.5Z" fill="#000"/></svg>
<div class="a" style="left:619px;top:553px;width:107px;height:35px;background:#f4f4f4;box-sizing:border-box;border:1px solid #d3d3d3;"></div>
<div class="a" style="left:619px;top:593px;width:107px;height:35px;background:#f4f4f4;box-sizing:border-box;border:1px solid #d3d3d3;"></div>
<svg class="a" style="left:314px;top:651px;" width="134" height="25" viewBox="0 0 134 25"><path d="M2 7Q3 4 8 3.5Q60 0.5 100 2Q122 3 125.5 6Q128 9 129.5 19Q130 22 128 22.5Q80 20 40 21.5Q15 22.5 8 22.5Q5 22.5 4.5 19Q3 11 2 7Z" fill="rgba(246,234,64,0.72)"/></svg>
<div class="a t" style="left:203.00px;top:514.56px;font-size:16px;line-height:16px;color:#1a1a1a;letter-spacing:-0.228px;">Endereço</div>
<div class="a t" style="left:207.00px;top:557.18px;font-size:15.5px;line-height:15.5px;color:#1a1a1a;letter-spacing:0.424px;">Morada:</div>
<div class="a t" style="left:207.00px;top:591.18px;font-size:15.5px;line-height:15.5px;color:#1a1a1a;">Localidade:</div>
<div class="a t" style="left:208.00px;top:623.18px;font-size:15.5px;line-height:15.5px;color:#1a1a1a;letter-spacing:-0.266px;">Cód. Postal:</div>
<div class="a t" style="left:207.10px;top:655.48px;font-size:15.5px;line-height:15.5px;color:#1a1a1a;transform:scaleX(0.9026);">País:</div>
<div class="a t" style="left:319.30px;top:555.48px;font-size:15.5px;line-height:15.5px;color:#1a1a1a;letter-spacing:-0.340px;">Gran Via, 3</div>
<div class="a" style="left:394px;top:554px;width:1px;height:18px;background:#000;"></div>
<div class="a t" style="left:318.80px;top:622.18px;font-size:15.5px;line-height:15.5px;color:#1a1a1a;transform:scaleX(0.9486);">28219</div>
<div class="a t" style="left:411.70px;top:622.18px;font-size:15.5px;line-height:15.5px;color:#1a1a1a;letter-spacing:0.108px;">Madrid</div>
<div class="a t" style="left:318.18px;top:655.68px;font-size:15.5px;line-height:15.5px;color:#988e2a;transform:scaleX(0.9165);">[ES] Espanha</div>
<div class="a t" style="left:662.40px;top:561.28px;font-size:15.5px;line-height:15.5px;color:#1a1a1a;transform:scaleX(0.8501);">OK</div>
<div class="a" style="left:662px;top:577px;width:10px;height:1px;background:#000;"></div>
<div class="a t" style="left:643.90px;top:601.28px;font-size:15.5px;line-height:15.5px;color:#1a1a1a;transform:scaleX(0.9342);">Cancelar</div>
<div class="a" style="left:644px;top:617px;width:10px;height:1px;background:#000;"></div>
</body></html>
